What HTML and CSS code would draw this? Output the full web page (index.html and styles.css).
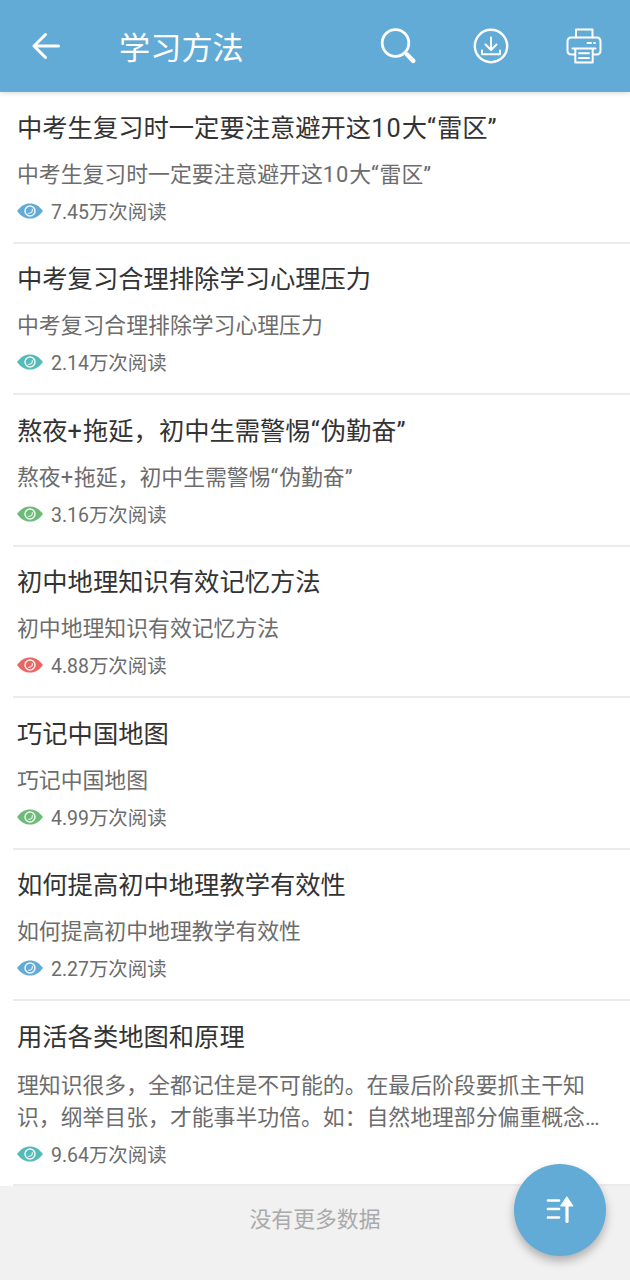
FILE: index.html
```html
<!DOCTYPE html>
<html lang="zh-CN">
<head>
<meta charset="utf-8">
<title>学习方法</title>
<link rel="stylesheet" href="styles.css">
</head>
<body>
<svg class="defs" aria-hidden="true">
  <symbol id="eye" viewBox="0 0 26 16">
    <path fill="currentColor" d="M0 8C4 2.700 8 .4 13 .4S22 2.700 26 8C22 13.300 18 15.600 13 15.600S4 13.300 0 8Z"/>
    <circle cx="13" cy="8" r="5" fill="none" stroke="#fff" stroke-opacity=".9" stroke-width="1.500"/>
    <path d="M15.300 6.200Q16 10.500 11.200 10.300" fill="none" stroke="#fff" stroke-opacity=".8" stroke-width="1.300"/>
  </symbol>
</svg>
<div class="app">
  <header class="bar">
    <svg class="back" viewBox="0 0 28 28"><path d="M26.500 14H2.500M13.500 2.500 2 14 13.500 25.500"/></svg>
    <h1 class="bar-title">学习方法</h1>
    <nav class="actions">
      <svg viewBox="0 0 36 36"><circle cx="15.500" cy="15" r="13.300" stroke-width="2.800"/><path d="M25 24.500 27.500 27" stroke-width="3"/><path d="M27.500 27 33.200 32.800" stroke-width="4.500"/></svg>
      <svg viewBox="0 0 36 36"><circle cx="18" cy="18" r="16.200" stroke-width="2.400"/><path d="M18 9.500V21.500M12.500 16.500 18 22 23.500 16.500" stroke-width="2"/><path d="M9 22.500V26.200H27V22.500" stroke-width="2"/></svg>
      <svg viewBox="0 0 36 36" stroke-width="2"><path d="M10 9.500V1.500H26.500V9.500"/><path d="M8.500 26.500H5.500Q1.500 26.500 1.500 22.500V13.500Q1.500 9.500 5.500 9.500H30.500Q34.500 9.500 34.500 13.500V22.500Q34.500 26.500 30.500 26.500H27.500"/><path d="M6.500 20.500H29.500M9.300 20.500V34.500H26.700V20.500M13 25.200H23M13 30H23"/><path d="M21.500 15H25M28 15H29"/></svg>
    </nav>
  </header>
  <main class="list">
    <article class="item"><h2 class="title">中考生复习时一定要注意避开这<span class="latin">10</span>大<span class="latin">“</span>雷区”</h2><p class="summary">中考生复习时一定要注意避开这<span class="latin">10</span>大<span class="latin">“</span>雷区”</p><div class="reads"><svg class="eye blue"><use href="#eye"/></svg>7.45万次阅读</div></article>
    <article class="item"><h2 class="title">中考复习合理排除学习心理压力</h2><p class="summary">中考复习合理排除学习心理压力</p><div class="reads"><svg class="eye teal"><use href="#eye"/></svg>2.14万次阅读</div></article>
    <article class="item"><h2 class="title">熬夜<span class="latin">+</span>拖延，初中生需警惕<span class="latin">“</span>伪勤奋”</h2><p class="summary">熬夜<span class="latin">+</span>拖延，初中生需警惕<span class="latin">“</span>伪勤奋”</p><div class="reads"><svg class="eye green"><use href="#eye"/></svg>3.16万次阅读</div></article>
    <article class="item"><h2 class="title">初中地理知识有效记忆方法</h2><p class="summary">初中地理知识有效记忆方法</p><div class="reads"><svg class="eye red"><use href="#eye"/></svg>4.88万次阅读</div></article>
    <article class="item"><h2 class="title">巧记中国地图</h2><p class="summary">巧记中国地图</p><div class="reads"><svg class="eye green"><use href="#eye"/></svg>4.99万次阅读</div></article>
    <article class="item"><h2 class="title">如何提高初中地理教学有效性</h2><p class="summary">如何提高初中地理教学有效性</p><div class="reads"><svg class="eye blue"><use href="#eye"/></svg>2.27万次阅读</div></article>
    <article class="item"><h2 class="title">用活各类地图和原理</h2><p class="summary long">理知识很多，全都记住是不可能的。在最后阶段要抓主干知<br>识，纲举目张，才能事半功倍。如：自然地理部分偏重概念…</p><div class="reads"><svg class="eye teal"><use href="#eye"/></svg>9.64万次阅读</div></article>
  </main>
  <footer class="end">没有更多数据</footer>
  <button class="fab" aria-label="排序"><svg viewBox="0 0 28 28"><path d="M2 4.500H13M2 13H13M2 21.500H13" stroke-width="2.700"/><path d="M21 8V25.500" stroke-width="3.200"/><path d="M21 1 27 10H15Z" fill="#fff" stroke-width="1"/></svg></button>
</div>
</body>
</html>
```
FILE: styles.css
```css
* { box-sizing: border-box; }
body {
  margin: 0;
  background: #f1f1f1;
  font-family: Roboto, "Noto Sans CJK SC", sans-serif;
}
h1, h2, p { margin: 0; font-weight: 400; }
.defs { display: none; }
.app {
  position: relative;
  height: 1280px;
  overflow: hidden;
  display: flex;
  flex-direction: column;
}
.bar {
  height: 92px;
  flex: none;
  display: flex;
  align-items: center;
  padding: 0 28px 0 32px;
  background: #61abd6;
  color: #fff;
  box-shadow: 0 1px 5px rgba(0, 0, 0, .16);
  z-index: 1;
}
.bar svg { fill: none; stroke: #fff; stroke-linecap: round; stroke-linejoin: round; }
.back { width: 28px; height: 28px; stroke-width: 3; }
.bar-title { margin-left: 59px; padding-top: 5px; font-size: 31.200px; line-height: 44px; }
.actions { margin-left: auto; display: flex; gap: 57px; }
.actions svg { width: 36px; height: 36px; }
.list { flex: none; background: #fff; }
.item {
  height: 151.500px;
  margin-left: 13px;
  padding: 20.500px 0 0 4px;
  border-bottom: 2px solid #ebebeb;
  white-space: nowrap;
}
.item:last-child { height: 185px; }
.title { font-size: 25.300px; line-height: 32px; color: #333; }
.summary { margin-top: 16px; font-size: 21.850px; line-height: 28px; color: #6c6c6c; }
.summary.long { margin-top: 16px; line-height: 32.500px; }
.latin { letter-spacing: .04em; }
.reads {
  margin-top: 10px;
  display: flex;
  align-items: center;
  gap: 8px;
  font-size: 19.450px;
  line-height: 28px;
  color: #6c6c6c;
}
.long + .reads { margin-top: 7.500px; }
.eye { width: 26px; height: 16px; margin-bottom: 4px; }
.blue { color: #61abd6; }
.teal { color: #55bbb8; }
.green { color: #6dbb78; }
.red { color: #e96563; }
.end {
  flex: 1;
  padding-top: 18px;
  text-align: center;
  font-size: 21.850px;
  line-height: 32px;
  color: #aaa;
}
.fab {
  position: absolute;
  left: 514px;
  top: 1164px;
  width: 92px;
  height: 92px;
  padding: 0;
  border: 0;
  border-radius: 50%;
  background: #61abd6;
  display: grid;
  place-items: center;
  box-shadow: 0 5px 10px rgba(0, 0, 0, .28);
}
.fab svg { width: 28px; height: 28px; fill: none; stroke: #fff; stroke-linecap: round; stroke-linejoin: round; }
```
